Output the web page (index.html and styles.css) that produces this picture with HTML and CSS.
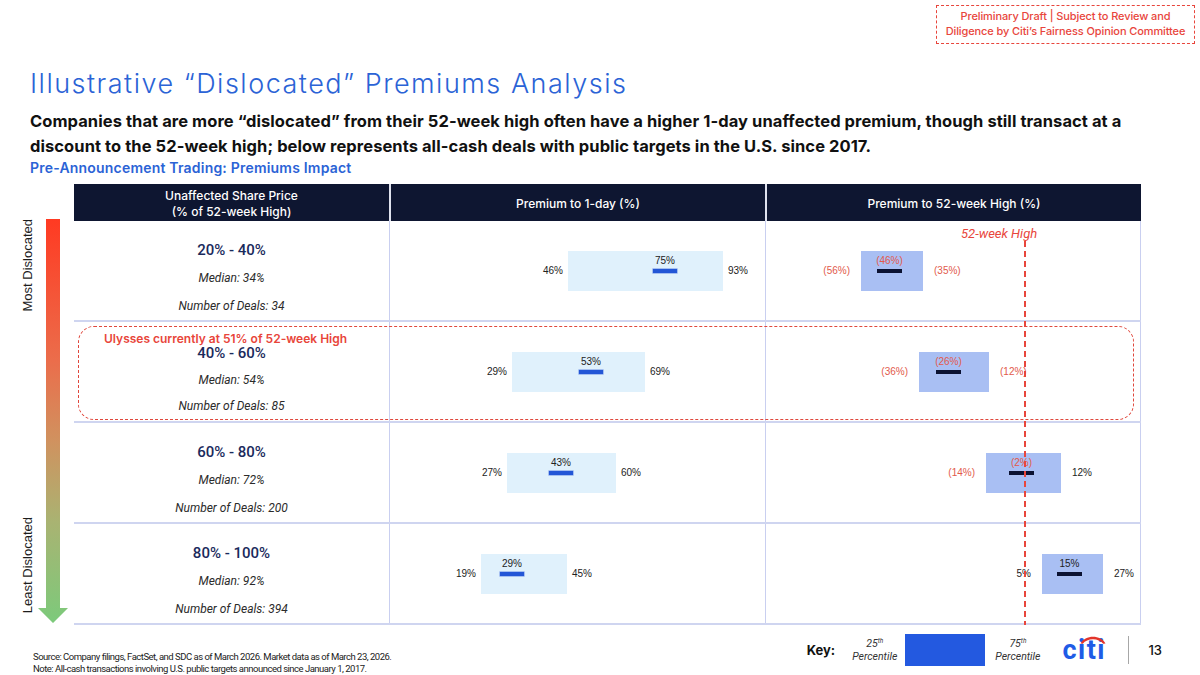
FILE: index.html
```html
<!DOCTYPE html>
<html lang="en">
<head>
<meta charset="utf-8">
<title>Illustrative Dislocated Premiums Analysis</title>
<link rel="stylesheet" href="styles.css">
</head>
<body>
<div class="draft">Preliminary Draft | Subject to Review and<br>Diligence by Citi’s Fairness Opinion Committee</div>

<header class="head">
  <h1 class="title">Illustrative “Dislocated” Premiums Analysis</h1>
  <p class="sub">Companies that are more “dislocated” from their 52-week high often have a higher 1-day unaffected premium, though still transact at a<br>discount to the 52-week high; below represents all-cash deals with public targets in the U.S. since 2017.</p>
  <h2 class="section">Pre-Announcement Trading: Premiums Impact</h2>
</header>

<div class="main">
  <div class="rail">
    <div class="rail-labels"><span>Most Dislocated</span><span>Least Dislocated</span></div>
    <svg class="arrow" width="30" height="404" viewBox="0 0 30 404">
      <defs>
        <linearGradient id="g" x1="0" y1="0" x2="0" y2="404" gradientUnits="userSpaceOnUse">
          <stop offset="0" stop-color="#ff3a22"/>
          <stop offset="0.35" stop-color="#eb6d4b"/>
          <stop offset="0.55" stop-color="#d0925f"/>
          <stop offset="0.75" stop-color="#a9b372"/>
          <stop offset="1" stop-color="#7cca7b"/>
        </linearGradient>
      </defs>
      <path d="M8 0 H22 V389 H30 L15 404 L0 389 H8 Z" fill="url(#g)"/>
    </svg>
  </div>

  <div class="table">
    <div class="thead">
      <div class="th">Unaffected Share Price<br>(% of 52-week High)</div>
      <div class="th">Premium to 1-day (%)</div>
      <div class="th">Premium to 52-week High (%)</div>
    </div>

    <div class="row">
      <div class="cat"><div class="range">20% - 40%</div><div class="median">Median: 34%</div><div class="deals">Number of Deals: 34</div></div>
      <div class="chart day">
        <div class="bar" style="left:178px;width:155px"><span class="lab lo">46%</span><span class="lab hi">93%</span><span class="med" style="left:97px"><span class="mlab">75%</span></span></div>
      </div>
      <div class="chart high">
        <div class="bar" style="left:95px;width:62px"><span class="lab lo neg">(56%)</span><span class="lab hi neg">(35%)</span><span class="med" style="left:28px"><span class="mlab neg">(46%)</span></span></div>
      </div>
    </div>

    <div class="row">
      <div class="cat focus"><div class="range">40% - 60%</div><div class="median">Median: 54%</div><div class="deals">Number of Deals: 85</div></div>
      <div class="chart day">
        <div class="bar" style="left:122px;width:133px"><span class="lab lo">29%</span><span class="lab hi">69%</span><span class="med" style="left:79px"><span class="mlab">53%</span></span></div>
      </div>
      <div class="chart high">
        <div class="bar" style="left:153px;width:70px"><span class="lab lo neg">(36%)</span><span class="lab hi neg">(12%)</span><span class="med" style="left:29px"><span class="mlab neg">(26%)</span></span></div>
      </div>
    </div>

    <div class="row">
      <div class="cat"><div class="range">60% - 80%</div><div class="median">Median: 72%</div><div class="deals">Number of Deals: 200</div></div>
      <div class="chart day">
        <div class="bar" style="left:117px;width:109px"><span class="lab lo">27%</span><span class="lab hi">60%</span><span class="med" style="left:54px"><span class="mlab">43%</span></span></div>
      </div>
      <div class="chart high">
        <div class="bar" style="left:220px;width:75px"><span class="lab lo neg">(14%)</span><span class="lab hi">12%</span><span class="med" style="left:35px"><span class="mlab neg">(2%)</span></span></div>
      </div>
    </div>

    <div class="row">
      <div class="cat"><div class="range">80% - 100%</div><div class="median">Median: 92%</div><div class="deals">Number of Deals: 394</div></div>
      <div class="chart day">
        <div class="bar" style="left:91px;width:86px"><span class="lab lo">19%</span><span class="lab hi">45%</span><span class="med" style="left:31px"><span class="mlab">29%</span></span></div>
      </div>
      <div class="chart high">
        <div class="bar" style="left:276px;width:61px"><span class="lab lo">5%</span><span class="lab hi">27%</span><span class="med" style="left:27px"><span class="mlab">15%</span></span></div>
      </div>
    </div>

    <div class="ulysses"><span class="ulysses-label">Ulysses currently at 51% of 52-week High</span></div>
    <div class="hl-line"></div>
    <div class="hl-label">52-week High</div>
  </div>
</div>

<footer class="foot">
  <div class="notes">
    <div>Source: Company filings, FactSet, and SDC as of March 2026. Market data as of March 23, 2026.</div>
    <div>Note: All-cash transactions involving U.S. public targets announced since January 1, 2017.</div>
  </div>
  <div class="key">
    <span class="key-label">Key:</span>
    <span class="pct"><span>25<sup>th</sup></span><span>Percentile</span></span>
    <span class="swatch"></span>
    <span class="pct"><span>75<sup>th</sup></span><span>Percentile</span></span>
    <span class="logo"><span class="citi">citi</span><svg class="arc" width="26" height="11" viewBox="0 0 26 11"><path d="M0.5 10.5 C5 1.5 21 1.5 25.5 10.5 L23.2 10.8 C19 4.6 7 4.6 2.8 10.8 Z" fill="#e3342a"/></svg></span>
    <span class="sep"></span>
    <span class="pgnum">13</span>
  </div>
</footer>
</body>
</html>
```

FILE: styles.css
```css
* { box-sizing: border-box; }

body {
  margin: 0;
  width: 1200px;
  height: 675px;
  overflow: hidden;
  position: relative;
  background: #ffffff;
  font-family: Inter, Roboto, "Liberation Sans", sans-serif;
  color: #111111;
}

.draft {
  position: absolute;
  top: 5px;
  right: 5px;
  width: 259px;
  height: 39px;
  border: 1.5px dashed #e8453c;
  color: #e8453c;
  font-weight: 500;
  font-size: 11px;
  line-height: 15px;
  text-align: center;
  padding-top: 3px;
  letter-spacing: -0.1px;
}

.head {
  padding: 67px 30px 0 30px;
}

.title {
  margin: 0;
  font-weight: 300;
  font-size: 27px;
  line-height: 34px;
  color: #2b63d6;
  letter-spacing: 1.5px;
}

.sub {
  margin: 8px 0 0 0;
  font-weight: 700;
  font-size: 16.5px;
  line-height: 25px;
  color: #111111;
  white-space: nowrap;
  letter-spacing: 0.07px;
}

.section {
  margin: 0;
  font-weight: 600;
  font-size: 14px;
  line-height: 18px;
  color: #2b63d6;
  letter-spacing: 0.2px;
}

.main {
  display: flex;
  margin-top: 7px;
}

.rail {
  width: 74px;
  display: flex;
  padding-top: 35px;
}

.rail-labels {
  width: 15px;
  margin-left: 20px;
  height: 394px;
  display: flex;
  flex-direction: column;
  justify-content: space-between;
  font-family: "Liberation Sans", Arial, sans-serif;
  font-size: 13px;
  color: #1d1d1d;
}

.rail-labels span {
  writing-mode: vertical-rl;
  transform: rotate(180deg);
  line-height: 15px;
}

.arrow {
  margin-left: 3px;
  display: block;
}

.table {
  position: relative;
  width: 1067px;
}

.thead {
  display: grid;
  grid-template-columns: 315px 376px 376px;
  height: 37px;
}

.th {
  background: #0e1631;
  color: #ffffff;
  font-weight: 500;
  font-size: 12px;
  line-height: 16px;
  display: flex;
  align-items: center;
  justify-content: center;
  text-align: center;
  padding-top: 3px;
}

.th + .th {
  border-left: 2px solid #dfe2ee;
}

.row {
  display: grid;
  grid-template-columns: 315px 376px 376px;
  height: 101px;
  border-bottom: 2px solid #cfd5f0;
}

.cat {
  display: flex;
  flex-direction: column;
  align-items: center;
  padding-top: 20px;
  font-family: Roboto, "Liberation Sans", sans-serif;
}

.range {
  font-weight: 500;
  font-size: 15px;
  line-height: 18px;
  color: #1a2a5c;
}

.median,
.deals {
  font-style: italic;
  font-size: 12px;
  line-height: 16px;
  color: #2b2b2b;
}

.median { margin-top: 11px; }
.deals { margin-top: 12px; }

.cat.focus { padding-top: 25px; }
.cat.focus .range { line-height: 13px; }
.cat.focus .median { margin-top: 12px; }
.cat.focus .deals { margin-top: 10px; }

.chart {
  position: relative;
  border-left: 1.5px solid #c9cff0;
}

.chart.high {
  border-right: 1.5px solid #c9cff0;
}

.bar {
  position: absolute;
  top: 30px;
  height: 40px;
}

.day .bar { background: #e0f1fc; }
.high .bar { background: #a9bff3; }

.lab {
  position: absolute;
  top: 0;
  line-height: 40px;
  font-family: "Liberation Sans", Arial, sans-serif;
  font-size: 10px;
  color: #222222;
  white-space: nowrap;
}

.day .lo { right: 100%; margin-right: 5px; }
.day .hi { left: 100%; margin-left: 5px; }
.high .lo { right: 100%; margin-right: 11px; }
.high .hi { left: 100%; margin-left: 11px; }

.med {
  position: absolute;
  top: 18px;
  width: 24px;
  height: 4px;
  margin-left: -12px;
}

.day .med { background: #2356d6; box-shadow: 0 0 0 0.6px #7e9ee8; }
.high .med { background: #0b1232; width: 25px; }

.mlab {
  position: absolute;
  bottom: 100%;
  left: 50%;
  transform: translateX(-50%);
  margin-bottom: 2px;
  font-family: "Liberation Sans", Arial, sans-serif;
  font-size: 10px;
  line-height: 12px;
  color: #222222;
  white-space: nowrap;
}

.lab.neg,
.mlab.neg { color: #e25a4b; }

.ulysses {
  position: absolute;
  left: 4px;
  top: 142px;
  width: 1056px;
  height: 94px;
  border: 1.2px dashed #e0473c;
  border-radius: 16px;
}

.ulysses-label {
  position: absolute;
  left: 25px;
  top: 5.5px;
  font-weight: 600;
  font-size: 12px;
  line-height: 12px;
  color: #e8453a;
  white-space: nowrap;
}

.hl-line {
  position: absolute;
  left: 950px;
  top: 57px;
  bottom: 0;
  width: 1.5px;
  background: repeating-linear-gradient(to bottom, #e8463c 0 6px, transparent 6px 10px);
}

.hl-label {
  position: absolute;
  left: 887px;
  top: 42px;
  font-family: Roboto, "Liberation Sans", sans-serif;
  font-style: italic;
  font-size: 13px;
  line-height: 16px;
  color: #e8463c;
  white-space: nowrap;
}

.foot {
  display: flex;
  justify-content: space-between;
  height: 50px;
}

.notes {
  align-self: flex-end;
  padding-left: 33px;
  font-family: Roboto, "Liberation Sans", sans-serif;
  font-size: 9.5px;
  line-height: 12px;
  color: #222222;
  letter-spacing: -0.5px;
  white-space: nowrap;
}

.key {
  display: flex;
  align-items: center;
  padding-right: 38px;
}

.key-label {
  font-weight: 700;
  font-size: 13px;
  color: #111111;
  margin-right: 17px;
}

.pct {
  display: flex;
  flex-direction: column;
  align-items: center;
  font-family: Roboto, "Liberation Sans", sans-serif;
  font-style: italic;
  font-size: 10.5px;
  line-height: 13px;
  color: #333333;
}

.pct sup {
  font-size: 6.5px;
  vertical-align: 4px;
  line-height: 0;
}

.swatch {
  width: 80px;
  height: 32px;
  background: #2359e0;
  margin: 0 10px 0 8px;
}

.logo {
  position: relative;
  margin-left: 22px;
  display: block;
}

.citi {
  display: block;
  font-family: Roboto, "Liberation Sans", sans-serif;
  font-weight: 700;
  font-size: 27px;
  line-height: 26px;
  color: #1f5ce6;
  letter-spacing: 1.5px;
}

.arc {
  position: absolute;
  left: 18px;
  top: -4px;
}

.sep {
  width: 1.5px;
  height: 28px;
  background: #a7a7a7;
  margin: 0 19px 0 22px;
}

.pgnum {
  font-weight: 500;
  font-size: 13px;
  color: #111111;
}
```
